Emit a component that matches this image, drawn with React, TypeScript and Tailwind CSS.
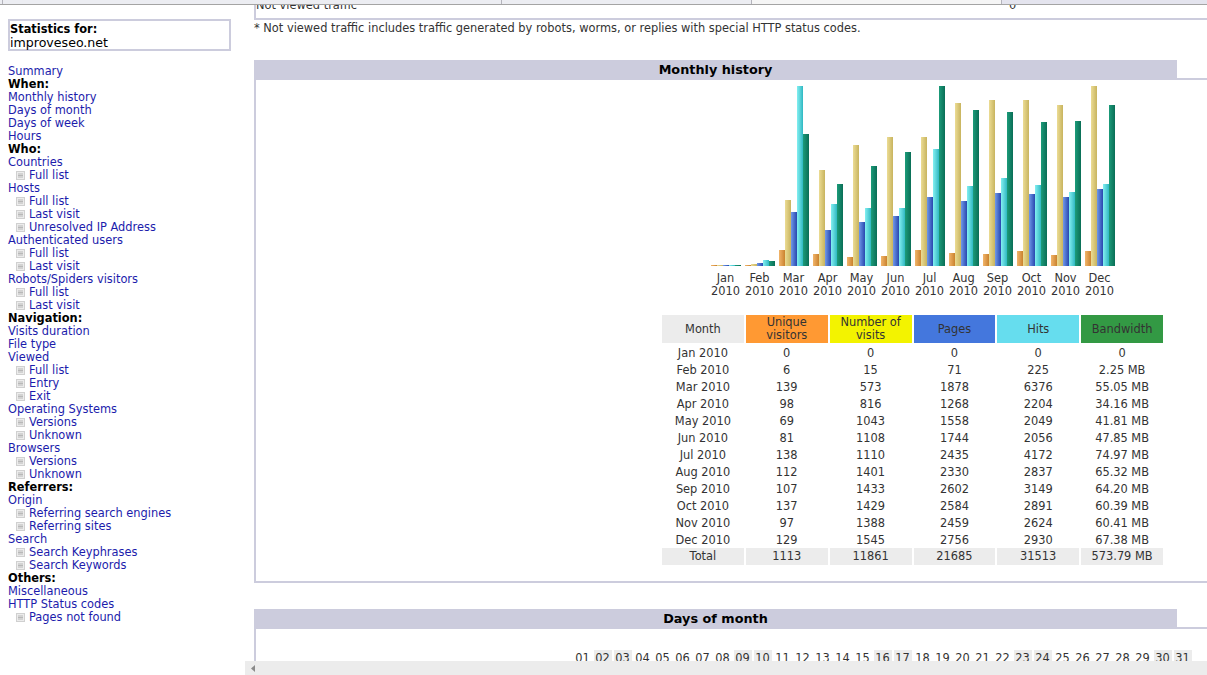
import React from 'react'

const font = "[font-family:'DejaVu_Sans',Verdana,sans-serif]"

type NavItem = { label: string; kind: 'link' | 'head' | 'sub' }

const nav: NavItem[] = [
  { label: 'Summary', kind: 'link' },
  { label: 'When:', kind: 'head' },
  { label: 'Monthly history', kind: 'link' },
  { label: 'Days of month', kind: 'link' },
  { label: 'Days of week', kind: 'link' },
  { label: 'Hours', kind: 'link' },
  { label: 'Who:', kind: 'head' },
  { label: 'Countries', kind: 'link' },
  { label: 'Full list', kind: 'sub' },
  { label: 'Hosts', kind: 'link' },
  { label: 'Full list', kind: 'sub' },
  { label: 'Last visit', kind: 'sub' },
  { label: 'Unresolved IP Address', kind: 'sub' },
  { label: 'Authenticated users', kind: 'link' },
  { label: 'Full list', kind: 'sub' },
  { label: 'Last visit', kind: 'sub' },
  { label: 'Robots/Spiders visitors', kind: 'link' },
  { label: 'Full list', kind: 'sub' },
  { label: 'Last visit', kind: 'sub' },
  { label: 'Navigation:', kind: 'head' },
  { label: 'Visits duration', kind: 'link' },
  { label: 'File type', kind: 'link' },
  { label: 'Viewed', kind: 'link' },
  { label: 'Full list', kind: 'sub' },
  { label: 'Entry', kind: 'sub' },
  { label: 'Exit', kind: 'sub' },
  { label: 'Operating Systems', kind: 'link' },
  { label: 'Versions', kind: 'sub' },
  { label: 'Unknown', kind: 'sub' },
  { label: 'Browsers', kind: 'link' },
  { label: 'Versions', kind: 'sub' },
  { label: 'Unknown', kind: 'sub' },
  { label: 'Referrers:', kind: 'head' },
  { label: 'Origin', kind: 'link' },
  { label: 'Referring search engines', kind: 'sub' },
  { label: 'Referring sites', kind: 'sub' },
  { label: 'Search', kind: 'link' },
  { label: 'Search Keyphrases', kind: 'sub' },
  { label: 'Search Keywords', kind: 'sub' },
  { label: 'Others:', kind: 'head' },
  { label: 'Miscellaneous', kind: 'link' },
  { label: 'HTTP Status codes', kind: 'link' },
  { label: 'Pages not found', kind: 'sub' },
]

// bar heights in px: visitors, visits, pages, hits, bandwidth
const bars: [string, number[]][] = [
  ['Jan', [1, 1, 1, 1, 1]],
  ['Feb', [1, 2, 3, 6, 5]],
  ['Mar', [16, 66, 54, 180, 132]],
  ['Apr', [12, 96, 36, 62, 82]],
  ['May', [9, 121, 44, 58, 100]],
  ['Jun', [10, 129, 50, 58, 114]],
  ['Jul', [16, 129, 69, 117, 180]],
  ['Aug', [13, 163, 65, 80, 156]],
  ['Sep', [12, 166, 73, 88, 154]],
  ['Oct', [15, 166, 72, 81, 144]],
  ['Nov', [11, 161, 69, 74, 145]],
  ['Dec', [15, 180, 77, 82, 161]],
]

const barColors = [
  'bg-linear-to-r from-[#f2b56a] to-[#c9822c]',
  'bg-linear-to-r from-[#ecdc94] to-[#c8b45e]',
  'bg-linear-to-r from-[#7299e8] to-[#2a46ae]',
  'bg-linear-to-r from-[#82f0f2] to-[#2cb8c2]',
  'bg-linear-to-r from-[#1c9c7a] to-[#0a6e56]',
]

const rows = [
  ['Jan 2010', '0', '0', '0', '0', '0'],
  ['Feb 2010', '6', '15', '71', '225', '2.25 MB'],
  ['Mar 2010', '139', '573', '1878', '6376', '55.05 MB'],
  ['Apr 2010', '98', '816', '1268', '2204', '34.16 MB'],
  ['May 2010', '69', '1043', '1558', '2049', '41.81 MB'],
  ['Jun 2010', '81', '1108', '1744', '2056', '47.85 MB'],
  ['Jul 2010', '138', '1110', '2435', '4172', '74.97 MB'],
  ['Aug 2010', '112', '1401', '2330', '2837', '65.32 MB'],
  ['Sep 2010', '107', '1433', '2602', '3149', '64.20 MB'],
  ['Oct 2010', '137', '1429', '2584', '2891', '60.39 MB'],
  ['Nov 2010', '97', '1388', '2459', '2624', '60.41 MB'],
  ['Dec 2010', '129', '1545', '2756', '2930', '67.38 MB'],
]

const totals = ['Total', '1113', '11861', '21685', '31513', '573.79 MB']

const headers = [
  { label: 'Month', color: 'bg-[#ececec]' },
  { label: 'Unique visitors', color: 'bg-[#ff9933]' },
  { label: 'Number of visits', color: 'bg-[#f3f300]' },
  { label: 'Pages', color: 'bg-[#4477dd]' },
  { label: 'Hits', color: 'bg-[#66ddee]' },
  { label: 'Bandwidth', color: 'bg-[#339944]' },
]

const weekend = ['02', '03', '09', '10', '16', '17', '23', '24', '30', '31']
const days = Array.from({ length: 31 }, (_, i) => String(i + 1).padStart(2, '0'))

function ListIcon() {
  return (
    <svg width="9" height="9" viewBox="0 0 9 9" className="shrink-0">
      <rect x="0.5" y="0.5" width="8" height="8" fill="#ececec" stroke="#d0d0d0" />
      <path d="M2 3h5M2 4.5h5M2 6h5" stroke="#b8b8b8" strokeWidth="1" />
    </svg>
  )
}

function Section({ title, children }: { title: string; children: React.ReactNode }) {
  return (
    <section className="w-[1317px]">
      <h2 className="w-[923px] h-[20px] bg-[#ccccdd] text-center text-[12.8px] leading-[20px] font-bold text-black">
        {title}
      </h2>
      <div className="border-2 border-[#ccccdd] -mt-[2px] pt-[2px] flex flex-col items-center">
        {children}
      </div>
    </section>
  )
}

function Sidebar() {
  return (
    <aside className="w-[245px] shrink-0 pl-2 pt-[14px]">
      <div className="w-[223px] h-[32px] border-2 border-[#ccccdd] pt-[2px] leading-[13px] text-black">
        <div className="font-bold text-[11.4px]">Statistics for:</div>
        <div className="text-[12.6px]">improveseo.net</div>
      </div>
      <ul className="mt-[14px] text-[11.4px] leading-[13px]">
        {nav.map((item, i) => (
          <li key={i}>
            {item.kind === 'head' && <b className="text-black">{item.label}</b>}
            {item.kind === 'link' && <a className="text-[#1c1cac]">{item.label}</a>}
            {item.kind === 'sub' && (
              <a className="flex items-center gap-[4px] pl-2 text-[#1c1cac]">
                <ListIcon />
                {item.label}
              </a>
            )}
          </li>
        ))}
      </ul>
    </aside>
  )
}

function MonthlyChart() {
  return (
    <div className="flex flex-col items-center pt-[4px]">
      <div className="flex gap-[4px] items-end h-[180px]">
        {bars.map(([month, values]) => (
          <div key={month} className="flex items-end w-[30px]">
            {values.map((h, i) => (
              <div key={i} className={`w-[6px] ${barColors[i]}`} style={{ height: h }} />
            ))}
          </div>
        ))}
      </div>
      <div className="flex gap-[4px] mt-[6px] text-[11.4px] leading-[13px] text-[#333]">
        {bars.map(([month]) => (
          <div key={month} className="w-[30px] flex flex-col items-center whitespace-nowrap">
            <span>{month}</span>
            <span>2010</span>
          </div>
        ))}
      </div>
    </div>
  )
}

function MonthlyTable() {
  return (
    <div className="w-[501px] mt-[17px] mb-[18px] text-[11.4px] leading-[13px] text-[#333] text-center">
      <div className="grid grid-cols-6 gap-x-[2px] mb-[1px]">
        {headers.map((h) => (
          <div key={h.label} className={`h-[28px] px-1 flex items-center justify-center ${h.color}`}>
            {h.label}
          </div>
        ))}
      </div>
      {rows.map((row) => (
        <div key={row[0]} className="grid grid-cols-6 gap-x-[2px] h-[17px] items-center">
          {row.map((cell, i) => (
            <div key={i} className="pt-[2px]">
              {cell}
            </div>
          ))}
        </div>
      ))}
      <div className="grid grid-cols-6 gap-x-[2px] h-[15px]">
        {totals.map((cell) => (
          <div key={cell} className="bg-[#ececec] leading-[17px]">
            {cell}
          </div>
        ))}
      </div>
    </div>
  )
}

export default function App() {
  return (
    <div className={`w-[1207px] h-[675px] overflow-hidden bg-white flex flex-col ${font}`}>
      <div className="h-[5px] shrink-0 grid grid-cols-[3px_499px_250px_250px_1fr] border-b border-[#a4a4a4] bg-[#ecedf2]">
        <div className="border-r border-[#b4b4bc]" />
        <div className="border-r border-[#b4b4bc]" />
        <div className="border-r border-[#b4b4bc]" />
        <div className="border-r border-[#b4b4bc] bg-[#f5f5f5]" />
        <div className="bg-[#e4e4ee]" />
      </div>

      <div className="flex flex-1 min-h-0">
        <Sidebar />

        <main className="flex-1 min-w-0 flex flex-col">
          <div className="flex-1 min-h-0 overflow-hidden pl-[9px]">
            <div className="w-[1317px] h-[15px] overflow-hidden border-2 border-t-0 border-[#ccccdd] flex items-end pb-[6px] text-[11.4px] leading-[13px] text-[#333]">
              <span className="w-[753px] whitespace-nowrap">Not viewed traffic</span>
              <span>0</span>
            </div>
            <p className="mt-[2px] text-[11.4px] leading-[13px] text-[#333] whitespace-nowrap">
              * Not viewed traffic includes traffic generated by robots, worms, or replies with special HTTP status codes.
            </p>

            <div className="mt-[25px]">
              <Section title="Monthly history">
                <MonthlyChart />
                <MonthlyTable />
              </Section>
            </div>

            <div className="mt-[26px]">
              <Section title="Days of month">
                <div className="flex mr-[60px] mt-[19px] text-[11.4px] leading-[16px] text-[#333]">
                  {days.map((d) => (
                    <div key={d} className="w-[20px] flex justify-center">
                      <span className={`w-[18px] text-center ${weekend.includes(d) ? 'bg-[#ececec]' : ''}`}>{d}</span>
                    </div>
                  ))}
                </div>
              </Section>
            </div>
          </div>

          <div className="h-[14px] shrink-0 bg-[#ececec] flex items-center pl-[6px]">
            <svg width="4" height="7" viewBox="0 0 4 7">
              <path d="M4 0v7L0 3.5z" fill="#8a8a8a" />
            </svg>
          </div>
        </main>
      </div>
    </div>
  )
}
